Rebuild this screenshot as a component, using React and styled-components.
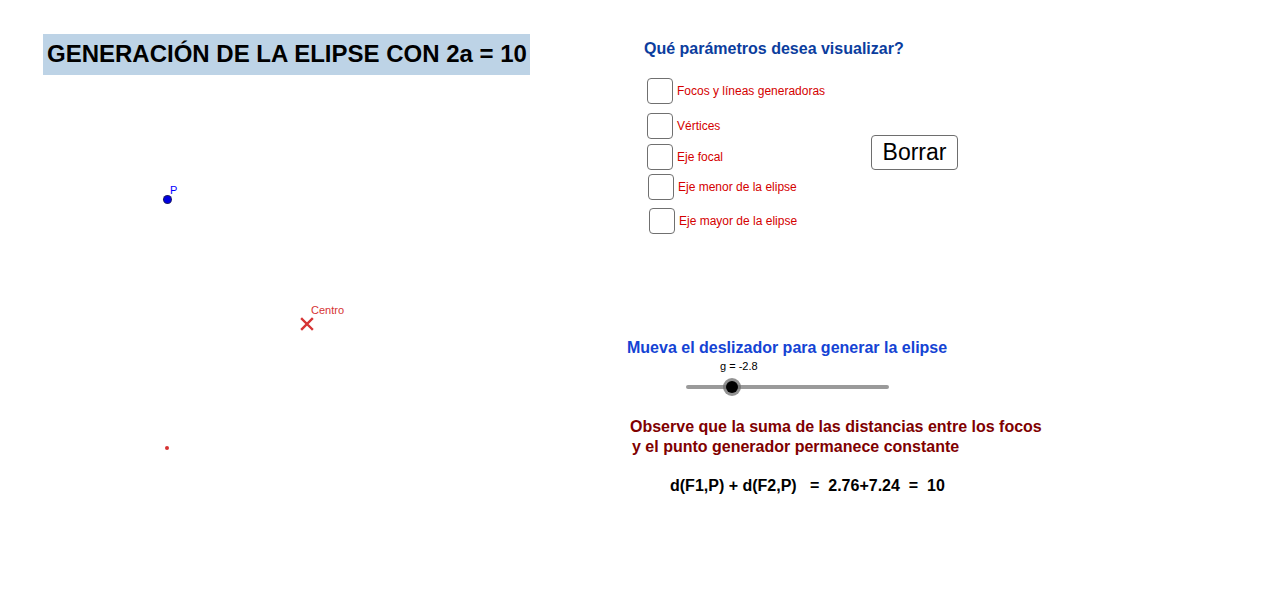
import React from 'react';
import styled, { createGlobalStyle } from 'styled-components';

const GlobalStyle = createGlobalStyle`
  html, body {
    margin: 0;
    padding: 0;
    background: #ffffff;
  }
  body {
    font-family: "Liberation Sans", Arial, sans-serif;
  }
`;

const Stage = styled.div`
  width: 1280px;
  height: 590px;
  display: grid;
  grid-template-columns: 600px 1fr;
  background: #ffffff;
  overflow: hidden;
`;

// left side: the drawing area, free canvas for the points
const Canvas = styled.div`
  position: relative;
  padding: 34px 0 0 43px;
`;

const TitleBox = styled.div`
  display: inline-block;
  box-sizing: border-box;
  width: 487px;
  height: 41px;
  padding-left: 4px;
  background: #bdd3e6;
  font-size: 24px;
  font-weight: bold;
  line-height: 39px;
  color: #000000;
  white-space: nowrap;
`;

const Marker = styled.div`
  position: absolute;
  left: ${props => props.x}px;
  top: ${props => props.y}px;
`;

const Dot = styled.div`
  width: ${props => props.size}px;
  height: ${props => props.size}px;
  margin-left: -${props => props.size / 2}px;
  margin-top: -${props => props.size / 2}px;
  border-radius: 50%;
  background: ${props => props.color};
  box-shadow: ${props => (props.outline ? '0 0 0 1px #1a1a66' : 'none')};
`;

const PointLabel = styled.span`
  position: absolute;
  left: ${props => props.dx}px;
  top: ${props => props.dy}px;
  font-size: 11px;
  line-height: 13px;
  color: ${props => props.color};
  white-space: nowrap;
`;

const Cross = styled.svg`
  display: block;
  margin-left: -7px;
  margin-top: -7px;
`;

// right side: the controls
const Panel = styled.div`
  display: flex;
  flex-direction: column;
  align-items: flex-start;
`;

const Heading = styled.div`
  margin: ${props => props.top}px 0 0 ${props => props.left}px;
  font-size: 16px;
  font-weight: bold;
  line-height: 20px;
  color: ${props => props.color};
  white-space: pre;
`;

const OptionsRow = styled.div`
  display: flex;
  margin: 19px 0 0 47px;
`;

const CheckList = styled.div`
  display: flex;
  flex-direction: column;
  width: 224px;
`;

const CheckRow = styled.label`
  display: flex;
  align-items: center;
  gap: 4px;
  margin: ${props => props.top}px 0 0 ${props => props.left}px;
`;

const CheckBox = styled.span`
  box-sizing: border-box;
  width: 26px;
  height: 26px;
  border: 1.3px solid #707070;
  border-radius: 4px;
  background: #ffffff;
`;

const CheckText = styled.span`
  font-size: 12px;
  color: #d40000;
  white-space: nowrap;
`;

const Button = styled.button`
  box-sizing: border-box;
  width: 87px;
  height: 35px;
  margin-top: 57px;
  padding: 0;
  border: 1.3px solid #6e6e6e;
  border-radius: 4px;
  background: #ffffff;
  font-family: "Liberation Sans", Arial, sans-serif;
  font-size: 23px;
  color: #000000;
`;

const SliderBlock = styled.div`
  display: flex;
  flex-direction: column;
  margin: 2px 0 0 86px;
`;

const SliderValue = styled.div`
  margin-left: 34px;
  font-size: 11px;
  line-height: 13px;
  color: #000000;
`;

const Track = styled.div`
  position: relative;
  width: 203px;
  height: 4px;
  margin-top: 12px;
  border-radius: 2px;
  background: #9a9a9a;
`;

const Knob = styled.div`
  position: absolute;
  top: 50%;
  width: 12px;
  height: 12px;
  margin: -6px 0 0 -6px;
  border-radius: 50%;
  background: #000000;
  box-shadow: 0 0 0 3px rgba(110, 110, 110, 0.75);
`;

const Note = styled.div`
  margin: 28px 0 0 30px;
  font-size: 16px;
  font-weight: bold;
  line-height: 20px;
  color: #800000;
`;

const NoteLine = styled.div`
  padding-left: ${props => props.indent || 0}px;
`;

const Equation = styled.div`
  margin: 19px 0 0 70px;
  font-size: 16px;
  font-weight: bold;
  line-height: 20px;
  color: #000000;
  white-space: pre;
`;

const options = [
  { text: 'Focos y líneas generadoras', top: 0, left: 0 },
  { text: 'Vértices', top: 9, left: 0 },
  { text: 'Eje focal', top: 5, left: 0 },
  { text: 'Eje menor de la elipse', top: 4, left: 1 },
  { text: 'Eje mayor de la elipse', top: 8, left: 2 },
];

const g = -2.8;
const gMin = -5;
const gMax = 5;

const App = () => {
  const knobPos = ((g - gMin) / (gMax - gMin)) * 203 + 1;

  return (
    <>
      <GlobalStyle />
      <Stage>
        <Canvas>
          <TitleBox>GENERACIÓN DE LA ELIPSE CON 2a = 10</TitleBox>

          <Marker x={167} y={199}>
            <Dot size={7} color="#0000e0" outline />
            <PointLabel dx={3} dy={-15} color="#0000ff">P</PointLabel>
          </Marker>

          <Marker x={307} y={324}>
            <Cross width="14" height="14" viewBox="0 0 14 14">
              <path d="M2 2 L12 12 M12 2 L2 12" stroke="#d63333" strokeWidth="2.4" strokeLinecap="square" />
            </Cross>
            <PointLabel dx={4} dy={-20} color="#d63333">Centro</PointLabel>
          </Marker>

          <Marker x={167} y={448}>
            <Dot size={4} color="#d63333" />
          </Marker>
        </Canvas>

        <Panel>
          <Heading top={39} left={44} color="#0b3d9e">Qué parámetros desea visualizar?</Heading>

          <OptionsRow>
            <CheckList>
              {options.map(o => (
                <CheckRow key={o.text} top={o.top} left={o.left}>
                  <CheckBox />
                  <CheckText>{o.text}</CheckText>
                </CheckRow>
              ))}
            </CheckList>
            <Button>Borrar</Button>
          </OptionsRow>

          <Heading top={104} left={27} color="#1443d4">Mueva el deslizador para generar la elipse</Heading>

          <SliderBlock>
            <SliderValue>g = {g}</SliderValue>
            <Track>
              <Knob style={{ left: `${knobPos}px` }} />
            </Track>
          </SliderBlock>

          <Note>
            <NoteLine>Observe que la suma de las distancias entre los focos</NoteLine>
            <NoteLine indent={2}>y el punto generador permanece constante</NoteLine>
          </Note>

          <Equation>{'d(F1,P) + d(F2,P)   =  2.76+7.24  =  10'}</Equation>
        </Panel>
      </Stage>
    </>
  );
};

export default App;
